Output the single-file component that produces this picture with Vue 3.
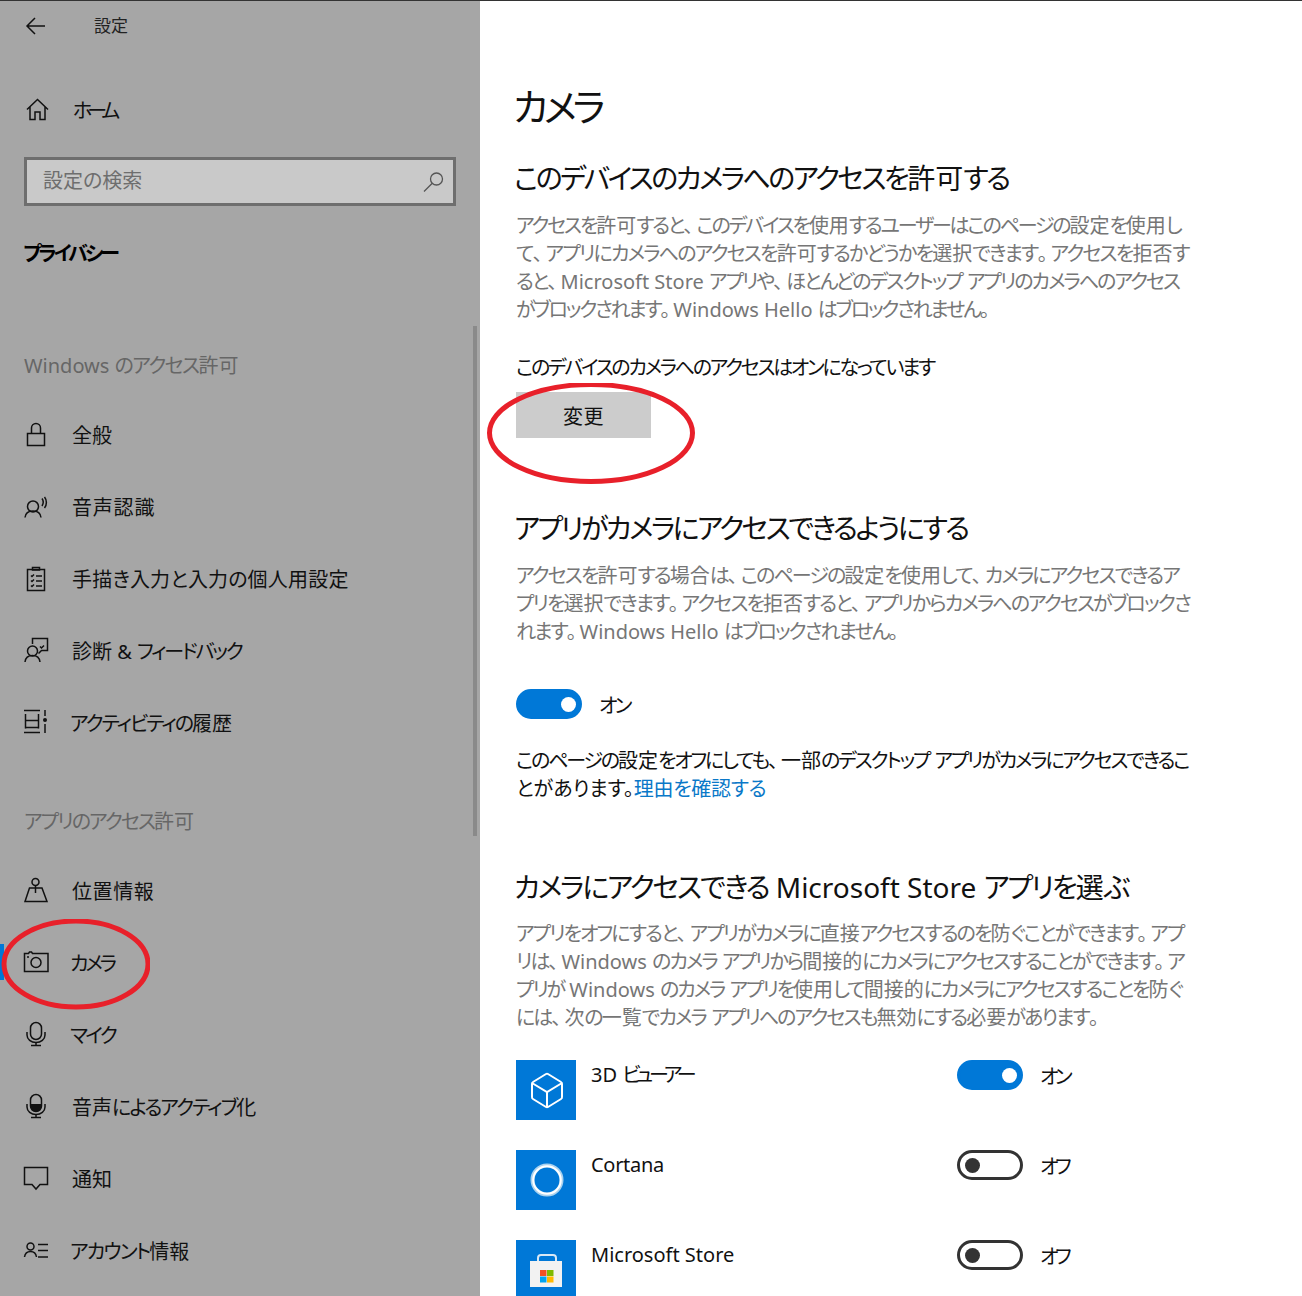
<script setup>
const navA = [
  { id: 'lock', label: '全般', ls: 0 },
  { id: 'speech', label: '音声認識', base: 0.8, ls: 0 },
  { id: 'ink', label: '手描き入力と入力の個人用設定', base: 0.2, ls: 0 },
  { id: 'feedback', label: '診断 & フィードバック', ls: -2.2 },
  { id: 'timeline', label: 'アクティビティの履歴', ls: -2, dx: -2 },
]
const navB = [
  { id: 'location', label: '位置情報', base: 0.6, ls: 0 },
  { id: 'camera', label: 'カメラ', ls: -3.2, dx: -2, active: true },
  { id: 'mic', label: 'マイク', ls: -2.6, dx: -2 },
  { id: 'voice', label: '音声によるアクティブ化', ls: -1.9 },
  { id: 'notify', label: '通知', ls: 0 },
  { id: 'account', label: 'アカウント情報', ls: -1.8, dx: -2 },
]
const apps = [
  { id: 'cube', name: '3D ビューアー', ls: -4.2, on: true },
  { id: 'cortana', name: 'Cortana', ls: 0, base: -0.3, on: false },
  { id: 'store', name: 'Microsoft Store', ls: 0, on: false },
]
const descA = [
  ['アクセスを許可すると、このデバイスを使用するユーザーはこのページの設定を使用し', -2],
  ['て、アプリにカメラへのアクセスを許可するかどうかを選択できます。アクセスを拒否す', -1.54],
  ['ると、Microsoft Store アプリや、ほとんどのデスクトップ アプリのカメラへのアクセス', -1.7],
  ['がブロックされます。Windows Hello はブロックされません。', -1.76],
]
const descB = [
  ['アクセスを許可する場合は、このページの設定を使用して、カメラにアクセスできるア', -1.6],
  ['プリを選択できます。アクセスを拒否すると、アプリからカメラへのアクセスがブロックさ', -1.63],
  ['れます。Windows Hello はブロックされません。', -1.33],
]
const descC = [
  ['アプリをオフにすると、アプリがカメラに直接アクセスするのを防ぐことができます。アプ', -1.68],
  ['リは、Windows のカメラ アプリから間接的にカメラにアクセスすることができます。ア', -1.66],
  ['プリが Windows のカメラ アプリを使用して間接的にカメラにアクセスすることを防ぐ', -2.07],
  ['には、次の一覧でカメラ アプリへのアクセスも無効にする必要があります。', -1.55],
]
const PUNCT = 3
// The reference's kana are narrower than the available font's, while its kanji and Latin are not,
// and its punctuation keeps more room. Tracking is set per run so each line keeps its measured width.
const tight = (text, ls) => {
  const kana = (text.match(/[ぁ-んァ-ヶー]/g) || []).length
  const punct = (text.match(/[、。]/g) || []).length
  const kanaLs = kana ? (ls * (kana + punct) - (ls ? PUNCT * punct : 0)) / kana : 0
  return text
    .split(/([ぁ-んァ-ヶー]+|[、。]+)/)
    .filter(Boolean)
    .map((t) => {
      if (/^[、。]/.test(t)) return { t, style: { letterSpacing: (ls ? PUNCT : 0) + 'px' } }
      if (/^[ぁ-んァ-ヶー]/.test(t)) return { t, style: { letterSpacing: kanaLs + 'px' } }
      return { t, style: null }
    })
}
const iconPaths = {
  lock: ['M3.500 11.500h17v12h-17z', 'M7.500 11.500V6a4.500 4.500 0 0 1 9 0v5.500'],
  speech: ['M3.500 12.500a5.500 5.500 0 1 0 11 0a5.500 5.500 0 1 0-11 0', 'M1 23.500c.5-4.500 3.500-6.500 8-6.500s7.500 2 8 6.500', 'M18 4.500c1.500 2 1.500 5 0 7.500', 'M20.500 3c2.500 3 2.500 8 0 11'],
  ink: ['M3.500 3.500h17v21h-17z', 'M8.500 3.500V1.500h7v2.500h-7z', 'M7 9.500l1 1 2-2', 'M12 10h6', 'M7 14.500l1 1 2-2', 'M12 15h6', 'M7 19.500l1 1 2-2', 'M12 20h6'],
  feedback: ['M8.500 6V.500h15v12h-6l-3 3', 'M3.500 13a5 5 0 1 0 10 0a5 5 0 1 0-10 0', 'M1 24c.500-4.500 3.500-6.500 7.500-6.500s7 2 7.500 6.500', 'M16 8.500l1.500 1.500 2.500-2.500'],
  timeline: ['M0 .500h16', 'M0 22.500h16', 'M1.500 4v14.500', 'M14.500 4v14.500', 'M1.500 10.500h13', 'M1.500 17.500h13', 'M21 0v6', 'M21 14v9'],
  location: ['M8 4a3.500 3.500 0 1 0 7 0a3.500 3.500 0 1 0-7 0', 'M11.500 7.500V15', 'M1 23.500L5.500 10H18l5 13.500z'],
  camera: ['M.500 3.500h4l1-1.500h2l1 1.500h15.500v18H.500z', 'M7 12.500a5 5 0 1 0 10 0a5 5 0 1 0-10 0', 'M3 7h2'],
  mic: ['M6.500 6a5.500 5.500 0 0 1 11 0v6a5.500 5.500 0 0 1-11 0z', 'M3 10v3a9 7.500 0 0 0 18 0v-3', 'M12 20.500v3', 'M7 23.500h10'],
  voice: ['M6.500 6a5.500 5.500 0 0 1 11 0v6a5.500 5.500 0 0 1-11 0z', 'M3 10v3a9 7.500 0 0 0 18 0v-3', 'M12 20.500v3', 'M7 23.500h10'],
  notify: ['M.500 1.500h23v17H16L12 23l-4-4.500H.500z'],
  account: ['M3 8.500a3.500 3.500 0 1 0 7 0a3.500 3.500 0 1 0-7 0', 'M.500 19c.500-3.500 2.500-5.500 6-5.500s5.500 2 6 5.500', 'M14 6.500h10', 'M14 12.500h10', 'M14 19h10'],
}
</script>

<template>
  <div class="page">
    <aside class="side">
      <div class="top">
        <svg class="back" width="24" height="24" viewBox="0 0 24 24"><path d="M21 12H3.500M11 4l-8 8 8 8" /></svg>
        <span class="top-title">設定</span>
      </div>
      <div class="row home">
        <svg class="ic" width="24" height="24" viewBox="0 0 24 24"><path d="M3 11.500L13.500 1.500 24 11.500M6 9v12.500h5v-7.500h5v7.500h5V9" /></svg>
        <span class="home-label">ホーム</span>
      </div>
      <div class="search">
        <span>設定の検索</span>
        <svg width="22" height="22" viewBox="0 0 22 22"><path d="M8.500 8a6 6 0 1 0 12 0a6 6 0 1 0-12 0M10 12.500L2 20.500" /></svg>
      </div>
      <div class="privacy">プライバシー</div>
      <div class="section first"><span v-for="(s, i) in tight('Windows のアクセス許可', -1.6)" :key="i" :style="s.style">{{ s.t }}</span></div>
      <div v-for="n in navA" :key="n.id" class="row">
        <svg class="ic" width="24" height="24" viewBox="0 0 24 24">
          <path v-for="(d, i) in iconPaths[n.id]" :key="i" :d="d" />
          <circle v-if="n.id === 'timeline'" cx="21" cy="10" r="2" class="solid" />
        </svg>
        <span class="label" :style="{ marginLeft: (n.dx || 0) + 'px', letterSpacing: (n.base || 0) + 'px' }"><span v-for="(s, i) in tight(n.label, n.ls)" :key="i" :style="s.style">{{ s.t }}</span></span>
      </div>
      <div class="section second"><span v-for="(s, i) in tight('アプリのアクセス許可', -1.9)" :key="i" :style="s.style">{{ s.t }}</span></div>
      <div v-for="n in navB" :key="n.id" class="row" :class="{ active: n.active }">
        <svg class="ic" width="24" height="24" viewBox="0 0 24 24">
          <path v-for="(d, i) in iconPaths[n.id]" :key="i" :d="d" />
          <path v-if="n.id === 'voice'" class="solid" d="M6.500 10h11v2a5.500 5.500 0 0 1-11 0z" />
        </svg>
        <span class="label" :style="{ marginLeft: (n.dx || 0) + 'px', letterSpacing: (n.base || 0) + 'px' }"><span v-for="(s, i) in tight(n.label, n.ls)" :key="i" :style="s.style">{{ s.t }}</span></span>
      </div>
      <div class="scrollbar"></div>
      <svg class="ring ring-nav" width="150" height="92" viewBox="0 0 150 92"><ellipse cx="76" cy="45" rx="72" ry="43" /></svg>
    </aside>

    <main class="main">
      <h1>カメラ</h1>
      <h2 class="h-a"><span v-for="(s, i) in tight('このデバイスのカメラへのアクセスを許可する', -2.6)" :key="i" :style="s.style">{{ s.t }}</span></h2>
      <p class="desc"><span v-for="(l, i) in descA" :key="i" class="line"><span v-for="(s, j) in tight(l[0], l[1])" :key="j" :style="s.style">{{ s.t }}</span></span></p>
      <div class="status">このデバイスのカメラへのアクセスはオンになっています</div>
      <div class="btn"><span>変更</span></div>
      <h2 class="h-b">アプリがカメラにアクセスできるようにする</h2>
      <p class="desc"><span v-for="(l, i) in descB" :key="i" class="line"><span v-for="(s, j) in tight(l[0], l[1])" :key="j" :style="s.style">{{ s.t }}</span></span></p>
      <div class="switch-line main-switch">
        <span class="toggle on"><i></i></span>
        <span class="state">オン</span>
      </div>
      <p class="note"><span class="line"><span v-for="(s, i) in tight('このページの設定をオフにしても、一部のデスクトップ アプリがカメラにアクセスできるこ', -2.05)" :key="i" :style="s.style">{{ s.t }}</span></span><span class="line">とがあります。<a>理由を確認する</a></span></p>
      <h2 class="h-c"><span v-for="(s, i) in tight('カメラにアクセスできる Microsoft Store アプリを選ぶ', -2.15)" :key="i" :style="s.style">{{ s.t }}</span></h2>
      <p class="desc desc-c"><span v-for="(l, i) in descC" :key="i" class="line"><span v-for="(s, j) in tight(l[0], l[1])" :key="j" :style="s.style">{{ s.t }}</span></span></p>
      <div class="apps">
        <div v-for="a in apps" :key="a.id" class="app">
          <div class="tile">
            <svg v-if="a.id === 'cube'" width="60" height="60" viewBox="0 0 60 60" class="white">
              <path d="M32 14l13 8a2 2 0 0 1 1 2v13a2 2 0 0 1-1 2l-13 8a2 2 0 0 1-2 0l-13-8a2 2 0 0 1-1-2V24a2 2 0 0 1 1-2l13-8a2 2 0 0 1 2 0z" />
              <path d="M16 23l15 9 15-9M31 32v15" />
            </svg>
            <svg v-else-if="a.id === 'cortana'" width="60" height="60" viewBox="0 0 60 60">
              <circle cx="31" cy="30" r="14.500" fill="none" stroke="#a9d2ef" stroke-width="4" />
              <circle cx="31" cy="30" r="13.800" fill="none" stroke="#fff" stroke-width="2" />
            </svg>
            <svg v-else width="60" height="60" viewBox="0 0 60 60">
              <path d="M22 23v-5a3 3 0 0 1 3-3h12a3 3 0 0 1 3 3v5" fill="none" stroke="#d9e8f5" stroke-width="2" />
              <path d="M14 21h32v26H14z" fill="#f2f2f2" />
              <rect x="24" y="30" width="6.500" height="6" fill="#f25022" />
              <rect x="31" y="30" width="6.500" height="6" fill="#7fba00" />
              <rect x="24" y="36.500" width="6.500" height="6" fill="#00a4ef" />
              <rect x="31" y="36.500" width="6.500" height="6" fill="#ffb900" />
            </svg>
          </div>
          <div class="app-name" :style="{ letterSpacing: (a.base || 0) + 'px' }"><span v-for="(s, i) in tight(a.name, a.ls)" :key="i" :style="s.style">{{ s.t }}</span></div>
          <div class="switch-line app-switch">
            <span class="toggle" :class="{ on: a.on }"><i></i></span>
            <span class="state">{{ a.on ? 'オン' : 'オフ' }}</span>
          </div>
        </div>
      </div>
      <svg class="ring ring-btn" width="212" height="104" viewBox="0 0 212 104"><ellipse cx="105" cy="50" rx="101.500" ry="48.500" /></svg>
    </main>
  </div>
</template>

<style scoped>
.page {
  display: flex;
  width: 1302px;
  height: 1296px;
  overflow: hidden;
  background: #fff;
  border-top: 1px solid #333;
  box-sizing: border-box;
  font-family: "Noto Sans", "Noto Sans CJK JP", sans-serif;
  font-feature-settings: "palt";
  font-size: 20px;
  line-height: 28px;
  color: #111;
}
.side {
  position: relative;
  width: 480px;
  flex: none;
  background: #a6a6a6;
  padding-left: 24px;
  box-sizing: border-box;
}
.ic path, .back path, .search path, .white path { fill: none; }
.ic path, .back path { stroke: #111; stroke-width: 1.500; }
.ic { flex: none; overflow: visible; }
.ic .solid, .solid { fill: #111; stroke: none; }
.top { height: 49px; display: flex; align-items: center; }
.top-title { margin-left: 46px; font-size: 17px; color: #222; }
.row {
  position: relative;
  height: 72px;
  display: flex;
  align-items: center;
  gap: 24px;
}
.label { padding-top: 4px; white-space: nowrap; }
.home { margin-top: 24px; }
.home-label { padding-top: 2px; letter-spacing: -5px; margin-left: 1px; }
.search {
  margin-top: 11px;
  width: 432px;
  height: 49px;
  box-sizing: border-box;
  border: 3px solid #6e6e6e;
  background: #c9c9c9;
  display: flex;
  align-items: center;
  justify-content: space-between;
  padding: 0 9px 2px 16px;
  color: #6e6e6e;
}
.search svg { margin-top: 2px; }
.search path { stroke: #555; stroke-width: 1.300; }
.privacy { margin-top: 34px; margin-left: -1px; font-weight: 700; letter-spacing: -3px; color: #000; }
.section { color: #666; white-space: nowrap; }
.first { margin-top: 84px; margin-bottom: 18px; }
.second { margin-top: 50px; margin-bottom: 18px; }
.active::before {
  content: "";
  position: absolute;
  left: -24px;
  top: 18px;
  width: 4px;
  height: 36px;
  background: #0078d7;
}
.scrollbar {
  position: absolute;
  left: 473px;
  top: 325px;
  width: 4px;
  height: 510px;
  background: #8a8a8a;
}
.ring { position: absolute; }
.ring ellipse { fill: none; stroke: #e8202a; stroke-width: 5; }
.ring-nav { left: 0; top: 918px; }
.ring-btn { left: 6px; top: 382px; }
.main {
  position: relative;
  flex: 1;
  padding-left: 36px;
  min-width: 0;
}
h1, h2, p { margin: 0; font-weight: 400; }
h1 { margin-top: 77px; font-size: 38px; line-height: 56px; margin-left: -3px; letter-spacing: -4.500px; color: #111; }
h2 { font-size: 28px; line-height: 40px; margin-left: -2px; color: #111; white-space: nowrap; }
.h-a { margin-top: 24px; }
.h-b { margin-top: 70px; letter-spacing: -2.600px; }
.h-c { margin-top: 64px; }
.line { display: block; white-space: nowrap; }
.desc { margin-top: 14px; color: #767676; }
.desc-c { margin-top: 13px; }
.status { margin-top: 30px; color: #111; letter-spacing: -2.300px; white-space: nowrap; }
.btn {
  margin-top: 10px;
  width: 135px;
  height: 46px;
  background: #ccc;
  display: flex;
  align-items: center;
  justify-content: center;
}
.btn span { padding-top: 4px; letter-spacing: 0.500px; }
.switch-line { display: flex; align-items: center; gap: 18px; height: 30px; }
.main-switch { margin-top: 43px; gap: 17px; }
.app-switch { gap: 17px; }
.state { padding-top: 3px; letter-spacing: -3.500px; }
.main-switch .state { letter-spacing: -2.800px; }
.note { margin-top: 28px; }
.note a { color: #0a78c8; letter-spacing: -0.300px; }
.toggle {
  box-sizing: border-box;
  width: 66px;
  height: 30px;
  border-radius: 15px;
  border: 3px solid #333;
  display: flex;
  align-items: center;
  padding: 0 5px;
}
.toggle i { width: 15px; height: 15px; border-radius: 50%; background: #333; }
.toggle.on { background: #0078d7; border-color: #0078d7; justify-content: flex-end; padding: 0 3px; }
.toggle.on i { background: #fff; }
.apps { margin-top: 28px; display: flex; flex-direction: column; gap: 30px; }
.app { display: flex; height: 60px; }
.tile { width: 60px; height: 60px; background: #0078d7; flex: none; }
.tile svg { display: block; }
.white path { stroke: #fff; stroke-width: 2; }
.app-name { margin-left: 15px; width: 366px; height: 30px; line-height: 30px; flex: none; white-space: nowrap; }
</style>
